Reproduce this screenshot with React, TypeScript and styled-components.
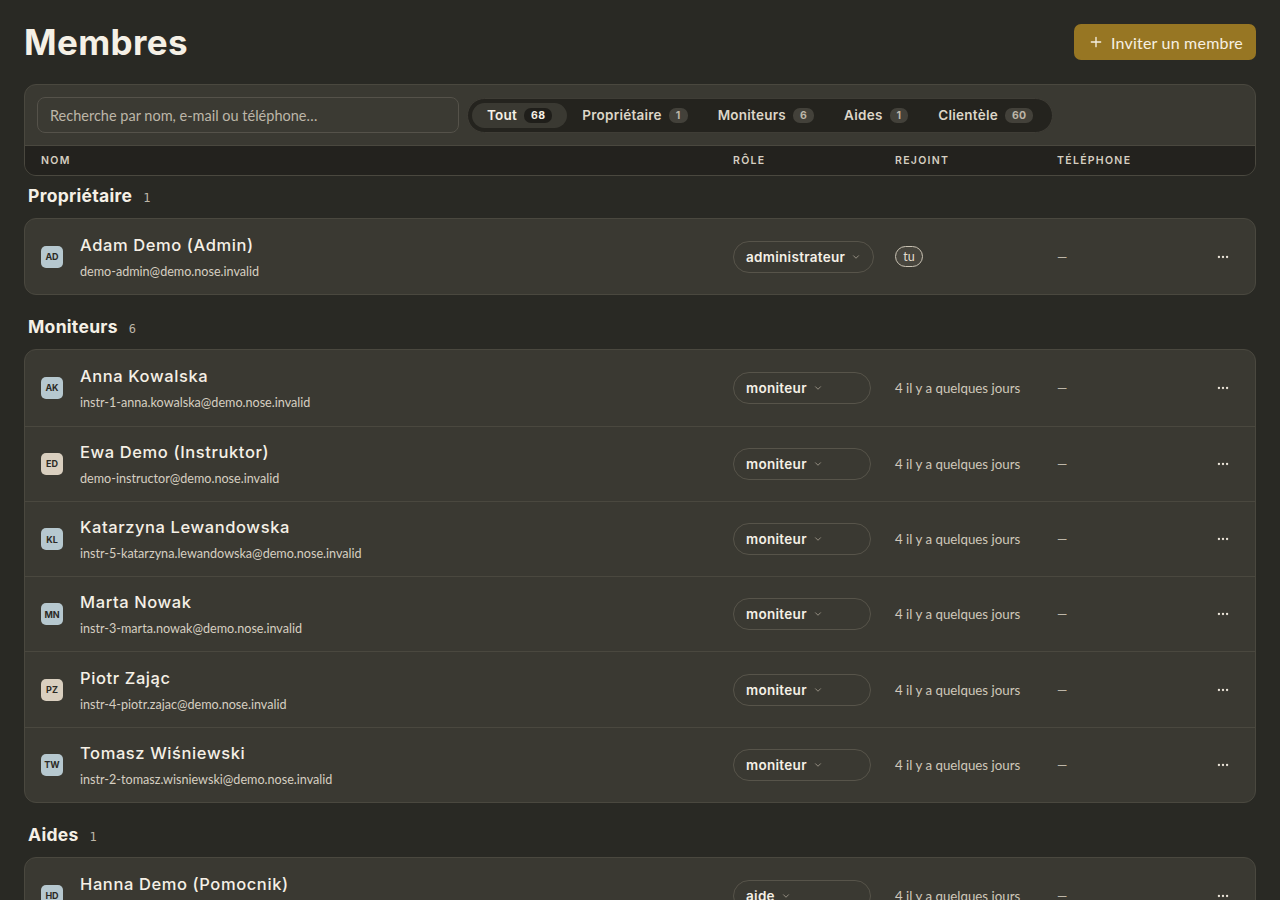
import React from 'react';
import styled, { createGlobalStyle } from 'styled-components';

const HEAD = `Inter, "Noto Sans", sans-serif`;
const BODY = `Lato, "Noto Sans", sans-serif`;

type Member = {
  initials: string;
  name: string;
  email: string;
  role: string;
  joined?: string;
  self?: boolean;
  tone: 'blue' | 'sand';
};

type Group = { title: string; count: number; members: Member[] };

const groups: Group[] = [
  {
    title: 'Propriétaire',
    count: 1,
    members: [
      { initials: 'AD', name: 'Adam Demo (Admin)', email: 'demo-admin@demo.nose.invalid', role: 'administrateur', self: true, tone: 'blue' },
    ],
  },
  {
    title: 'Moniteurs',
    count: 6,
    members: [
      { initials: 'AK', name: 'Anna Kowalska', email: 'instr-1-anna.kowalska@demo.nose.invalid', role: 'moniteur', joined: '4 il y a quelques jours', tone: 'blue' },
      { initials: 'ED', name: 'Ewa Demo (Instruktor)', email: 'demo-instructor@demo.nose.invalid', role: 'moniteur', joined: '4 il y a quelques jours', tone: 'sand' },
      { initials: 'KL', name: 'Katarzyna Lewandowska', email: 'instr-5-katarzyna.lewandowska@demo.nose.invalid', role: 'moniteur', joined: '4 il y a quelques jours', tone: 'blue' },
      { initials: 'MN', name: 'Marta Nowak', email: 'instr-3-marta.nowak@demo.nose.invalid', role: 'moniteur', joined: '4 il y a quelques jours', tone: 'blue' },
      { initials: 'PZ', name: 'Piotr Zając', email: 'instr-4-piotr.zajac@demo.nose.invalid', role: 'moniteur', joined: '4 il y a quelques jours', tone: 'sand' },
      { initials: 'TW', name: 'Tomasz Wiśniewski', email: 'instr-2-tomasz.wisniewski@demo.nose.invalid', role: 'moniteur', joined: '4 il y a quelques jours', tone: 'blue' },
    ],
  },
  {
    title: 'Aides',
    count: 1,
    members: [
      { initials: 'HD', name: 'Hanna Demo (Pomocnik)', email: 'helper@demo.nose.invalid', role: 'aide', joined: '4 il y a quelques jours', tone: 'blue' },
    ],
  },
];

const tabs = [
  { label: 'Tout', count: 68, active: true },
  { label: 'Propriétaire', count: 1 },
  { label: 'Moniteurs', count: 6 },
  { label: 'Aides', count: 1 },
  { label: 'Clientèle', count: 60 },
];

const Chevron = () => (
  <svg width="10" height="10" viewBox="0 0 24 24" fill="none" stroke="currentColor" strokeWidth="2" strokeLinecap="round" strokeLinejoin="round">
    <path d="m6 9 6 6 6-6" />
  </svg>
);

const Dots = () => (
  <svg width="14" height="14" viewBox="0 0 24 24" fill="currentColor">
    <circle cx="5" cy="12" r="2" />
    <circle cx="12" cy="12" r="2" />
    <circle cx="19" cy="12" r="2" />
  </svg>
);

const App: React.FC = () => (
  <>
    <GlobalStyle />
    <Page>
      <TopBar>
        <Title>Membres</Title>
        <InviteButton>
          <svg width="16" height="16" viewBox="0 0 24 24" fill="none" stroke="currentColor" strokeWidth="2" strokeLinecap="round">
            <path d="M12 5v14M5 12h14" />
          </svg>
          Inviter un membre
        </InviteButton>
      </TopBar>

      <Panel>
        <Toolbar>
          <Search placeholder="Recherche par nom, e-mail ou téléphone…" />
          <Tabs>
            {tabs.map((t) => (
              <Tab key={t.label} $active={t.active}>
                {t.label}
                <TabCount $active={t.active}>{t.count}</TabCount>
              </Tab>
            ))}
          </Tabs>
        </Toolbar>
        <HeaderRow>
          <span>Nom</span>
          <span>Rôle</span>
          <span>Rejoint</span>
          <span>Téléphone</span>
          <span />
        </HeaderRow>
      </Panel>

      {groups.map((g) => (
        <Section key={g.title}>
          <SectionTitle>
            {g.title}
            <SectionCount>{g.count}</SectionCount>
          </SectionTitle>
          <Card>
            {g.members.map((m) => (
              <Row key={m.email}>
                <Who>
                  <Avatar $tone={m.tone}>{m.initials}</Avatar>
                  <div>
                    <Name>{m.name}</Name>
                    <Email>{m.email}</Email>
                  </div>
                </Who>
                <div>
                  <RoleSelect>
                    {m.role}
                    <Chevron />
                  </RoleSelect>
                </div>
                <Joined>{m.self ? <SelfBadge>tu</SelfBadge> : m.joined}</Joined>
                <Muted>—</Muted>
                <MoreButton>
                  <Dots />
                </MoreButton>
              </Row>
            ))}
          </Card>
        </Section>
      ))}
    </Page>
  </>
);

const GlobalStyle = createGlobalStyle`
  html, body {
    margin: 0;
    background: #292924;
    color: #f1ece2;
    font-family: ${BODY};
  }
  * { box-sizing: border-box; }
`;

const Page = styled.main`
  padding: 24px;
  display: flex;
  flex-direction: column;
`;

const TopBar = styled.header`
  display: flex;
  align-items: center;
  justify-content: space-between;
  height: 36px;
  margin-bottom: 24px;
`;

const Title = styled.h1`
  margin: 0;
  font-family: ${HEAD};
  font-size: 35px;
  font-weight: 700;
  letter-spacing: 0.4px;
  color: #f5f0e6;
`;

const InviteButton = styled.button`
  display: flex;
  align-items: center;
  gap: 7px;
  height: 36px;
  padding: 0 13px 0 14px;
  border: none;
  border-radius: 7px;
  background: #977623;
  color: #f6f0e2;
  font-family: ${BODY};
  font-size: 16px;
  font-weight: 400;
  letter-spacing: 0.2px;
`;

const Panel = styled.section`
  background: #3a3932;
  border: 1px solid #4a483f;
  border-radius: 12px;
  overflow: hidden;
  margin-bottom: 10px;
`;

const Toolbar = styled.div`
  display: flex;
  align-items: center;
  gap: 8px;
  padding: 12px;
  border-bottom: 1px solid #4a483f;
`;

const Search = styled.input`
  width: 422px;
  height: 36px;
  padding: 0 12px;
  border: 1px solid #55524a;
  border-radius: 8px;
  background: #3b3a33;
  color: #f1ece2;
  font-family: ${BODY};
  font-size: 14.5px;
  outline: none;

  &::placeholder {
    color: #bdb6a8;
  }
`;

const Tabs = styled.div`
  display: flex;
  align-items: center;
  height: 35px;
  padding: 0 4px;
  border: 1px solid #3f3d36;
  border-radius: 18px;
  background: #24231e;
`;

const Tab = styled.div<{ $active?: boolean }>`
  display: flex;
  align-items: center;
  gap: 7px;
  height: 25px;
  padding: 0 15px;
  border-radius: 13px;
  background: ${({ $active }) => ($active ? '#3a3932' : 'transparent')};
  color: ${({ $active }) => ($active ? '#f5f0e6' : '#ddd6c8')};
  font-family: ${HEAD};
  font-size: 13.5px;
  font-weight: 600;
  letter-spacing: 0.25px;
`;

const TabCount = styled.span<{ $active?: boolean }>`
  padding: 1px 7px;
  border-radius: 7px;
  background: ${({ $active }) => ($active ? '#1f1e1a' : '#43413a')};
  color: ${({ $active }) => ($active ? '#f5f0e6' : '#bdb6a8')};
  font-size: 10.5px;
  font-weight: 700;
  line-height: 13px;
`;

const Grid = styled.div`
  display: grid;
  grid-template-columns: 1fr 150px 150px 138px 32px;
  column-gap: 12px;
  align-items: center;
  padding: 0 16px;
`;

const HeaderRow = styled(Grid)`
  height: 29px;
  background: #23221e;
  color: #d6cfc1;
  font-family: ${HEAD};
  font-size: 10.5px;
  font-weight: 600;
  letter-spacing: 1.3px;
  text-transform: uppercase;
`;

const Section = styled.section`
  display: flex;
  flex-direction: column;
  gap: 10px;

  & + & {
    margin-top: 22px;
  }
`;

const SectionTitle = styled.h2`
  display: flex;
  align-items: baseline;
  gap: 11px;
  margin: 0 0 0 4px;
  font-family: ${HEAD};
  font-size: 17.5px;
  font-weight: 700;
  line-height: 20px;
  letter-spacing: 0.3px;
  color: #f5f0e6;
`;

const SectionCount = styled.span`
  font-family: "DejaVu Sans Mono", monospace;
  font-size: 12px;
  font-weight: 400;
  color: #bdb6a8;
`;

const Card = styled.div`
  background: #3a3932;
  border: 1px solid #4a483f;
  border-radius: 12px;
  overflow: hidden;
`;

const Row = styled(Grid)`
  height: 75.3px;

  & + & {
    border-top: 1px solid #4a483f;
  }
`;

const Who = styled.div`
  display: flex;
  align-items: center;
  gap: 17px;
`;

const Avatar = styled.div<{ $tone: 'blue' | 'sand' }>`
  width: 22px;
  height: 22px;
  display: grid;
  place-items: center;
  flex-shrink: 0;
  border-radius: 5px;
  background: ${({ $tone }) => ($tone === 'blue' ? '#b6c8cf' : '#d9cfbf')};
  color: #2b2a25;
  font-family: ${HEAD};
  font-size: 9px;
  font-weight: 700;
`;

const Name = styled.div`
  font-family: ${HEAD};
  font-size: 16.5px;
  font-weight: 500;
  line-height: 24px;
  letter-spacing: 0.6px;
  color: #f5f0e6;
`;

const Email = styled.div`
  margin-top: 6px;
  font-size: 12.6px;
  line-height: 18px;
  color: #d6cfc1;
`;

const RoleSelect = styled.div`
  display: inline-flex;
  align-items: center;
  gap: 6px;
  min-width: 138px;
  height: 32px;
  padding: 0 12px;
  border: 1px solid #57544a;
  border-radius: 16px;
  font-family: ${HEAD};
  font-size: 13.5px;
  font-weight: 600;
  letter-spacing: 0.3px;
  color: #f5f0e6;

  svg {
    color: #a59e90;
  }
`;

const Joined = styled.div`
  font-size: 13.3px;
  color: #cfc8ba;
`;

const SelfBadge = styled.span`
  display: inline-flex;
  align-items: center;
  justify-content: center;
  width: 28px;
  height: 21px;
  border: 1px solid #c9c2b3;
  border-radius: 11px;
  background: #47453d;
  color: #e4ddcf;
  font-size: 12.5px;
`;

const Muted = styled.div`
  font-size: 13px;
  color: #bdb6a8;
`;

const MoreButton = styled.div`
  display: grid;
  place-items: center;
  height: 28px;
  color: #ece6da;
`;

export default App;
